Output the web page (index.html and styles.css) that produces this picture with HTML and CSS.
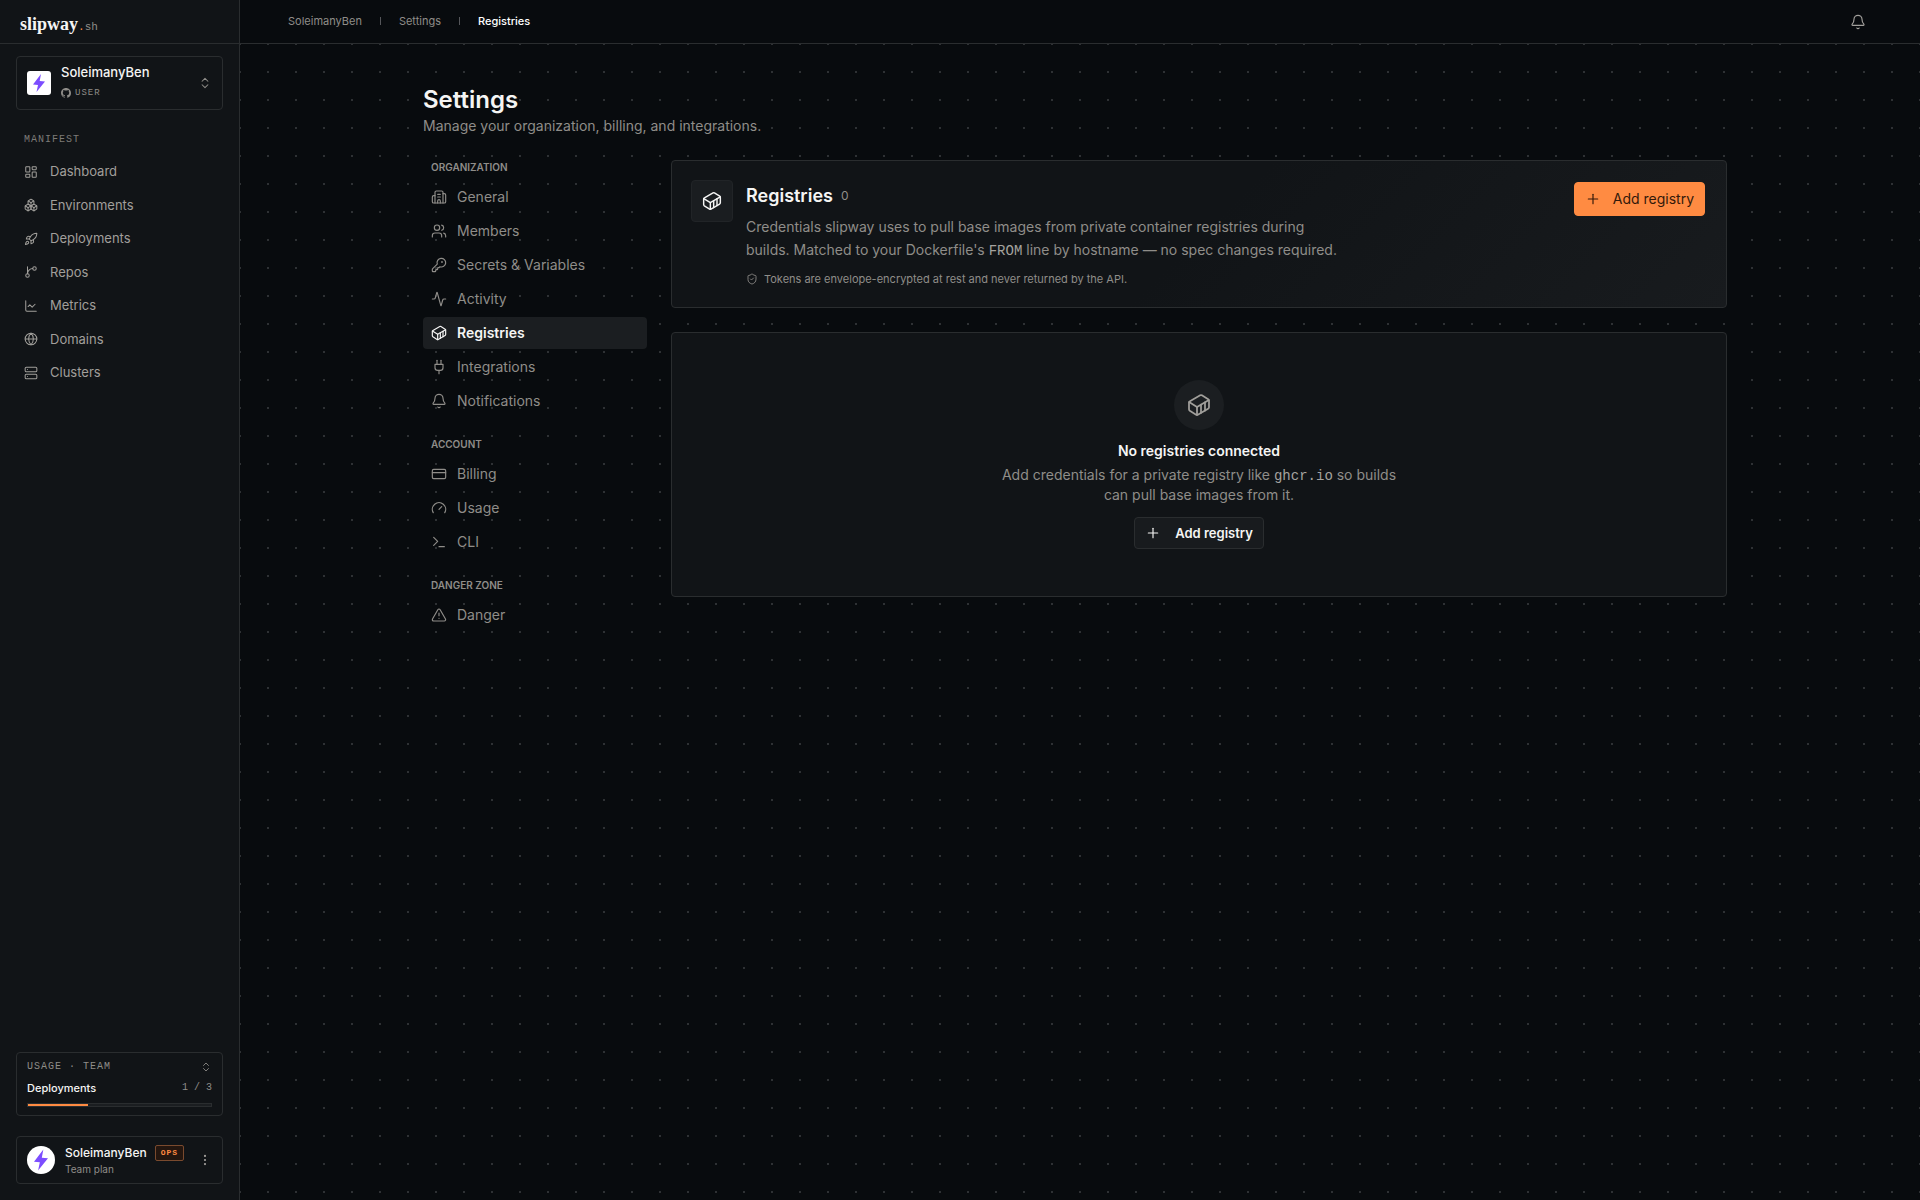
FILE: index.html
```html
<!DOCTYPE html>
<html lang="en">
<head>
    <meta charset="utf-8">
    <title>Registries - slipway.sh</title>
    <meta name="viewport" content="width=device-width, initial-scale=1">
    <link rel="stylesheet" href="styles.css">
</head>
<body>
    <svg class="sprite" aria-hidden="true">
        <symbol id="dashboard" viewBox="0 0 24 24"><rect x="3" y="3" width="7" height="9" rx="1"/><rect x="14" y="3" width="7" height="5" rx="1"/><rect x="14" y="12" width="7" height="9" rx="1"/><rect x="3" y="16" width="7" height="5" rx="1"/></symbol>
        <symbol id="boxes" viewBox="0 0 24 24"><path d="M2.97 12.92A2 2 0 0 0 2 14.63v3.24a2 2 0 0 0 .97 1.71l3 1.8a2 2 0 0 0 2.06 0L12 19v-5.5l-5-3-4.03 2.42Z"/><path d="m7 16.5-4.74-2.85"/><path d="m7 16.5 5-3"/><path d="M7 16.5v5.17"/><path d="M12 13.5V19l3.97 2.38a2 2 0 0 0 2.06 0l3-1.8a2 2 0 0 0 .97-1.71v-3.24a2 2 0 0 0-.97-1.71L17 10.5l-5 3Z"/><path d="m17 16.5-5-3"/><path d="m17 16.5 4.74-2.85"/><path d="M17 16.5v5.17"/><path d="M7.97 4.42A2 2 0 0 0 7 6.13v4.37l5 3 5-3V6.13a2 2 0 0 0-.97-1.71l-3-1.8a2 2 0 0 0-2.06 0l-3 1.8Z"/><path d="M12 8 7.26 5.15"/><path d="m12 8 4.74-2.85"/><path d="M12 13.5V8"/></symbol>
        <symbol id="rocket" viewBox="0 0 24 24"><path d="M4.5 16.5c-1.5 1.26-2 5-2 5s3.74-.5 5-2c.71-.84.7-2.13-.09-2.91a2.18 2.18 0 0 0-2.91-.09z"/><path d="m12 15-3-3a22 22 0 0 1 2-3.95A12.88 12.88 0 0 1 22 2c0 2.72-.78 7.5-6 11a22.35 22.35 0 0 1-4 2z"/><path d="M9 12H4s.55-3.03 2-4c1.62-1.08 5 0 5 0"/><path d="M12 15v5s3.03-.55 4-2c1.08-1.62 0-5 0-5"/></symbol>
        <symbol id="branch" viewBox="0 0 24 24"><path d="M15 6a9 9 0 0 0-9 9V3"/><circle cx="18" cy="6" r="3"/><circle cx="6" cy="18" r="3"/></symbol>
        <symbol id="chart" viewBox="0 0 24 24"><path d="M3 3v16a2 2 0 0 0 2 2h16"/><path d="m19 9-5 5-4-4-3 3"/></symbol>
        <symbol id="globe" viewBox="0 0 24 24"><circle cx="12" cy="12" r="10"/><path d="M12 2a14.5 14.5 0 0 0 0 20 14.5 14.5 0 0 0 0-20"/><path d="M2 12h20"/></symbol>
        <symbol id="server" viewBox="0 0 24 24"><rect x="2" y="2" width="20" height="8" rx="2"/><rect x="2" y="14" width="20" height="8" rx="2"/><path d="M6 6h.01M6 18h.01"/></symbol>
        <symbol id="building" viewBox="0 0 24 24"><path d="M10 12h4"/><path d="M10 8h4"/><path d="M14 21v-3a2 2 0 0 0-4 0v3"/><path d="M6 10H4a2 2 0 0 0-2 2v7a2 2 0 0 0 2 2h16a2 2 0 0 0 2-2V9a2 2 0 0 0-2-2h-2"/><path d="M6 21V5a2 2 0 0 1 2-2h8a2 2 0 0 1 2 2v16"/></symbol>
        <symbol id="users" viewBox="0 0 24 24"><path d="M16 21v-2a4 4 0 0 0-4-4H6a4 4 0 0 0-4 4v2"/><circle cx="9" cy="7" r="4"/><path d="M22 21v-2a4 4 0 0 0-3-3.87"/><path d="M16 3.13a4 4 0 0 1 0 7.75"/></symbol>
        <symbol id="key" viewBox="0 0 24 24"><path d="M2.586 17.414A2 2 0 0 0 2 18.828V21a1 1 0 0 0 1 1h3a1 1 0 0 0 1-1v-1a1 1 0 0 1 1-1h1a1 1 0 0 0 1-1v-1a1 1 0 0 1 1-1h.172a2 2 0 0 0 1.414-.586l.814-.814a6.5 6.5 0 1 0-4-4z"/><circle cx="16.5" cy="7.5" r=".5" fill="currentColor"/></symbol>
        <symbol id="activity" viewBox="0 0 24 24"><path d="M22 12h-2.48a2 2 0 0 0-1.93 1.46l-2.35 8.36a.25.25 0 0 1-.48 0L9.24 2.18a.25.25 0 0 0-.48 0l-2.35 8.36A2 2 0 0 1 4.49 12H2"/></symbol>
        <symbol id="container" viewBox="0 0 24 24"><path d="M22 7.7c0-.6-.4-1.2-.8-1.5l-6.3-3.9a1.72 1.72 0 0 0-1.7 0l-10.3 6c-.5.2-.9.8-.9 1.4v6.6c0 .5.4 1.2.8 1.5l6.3 3.9a1.72 1.72 0 0 0 1.7 0l10.3-6c.5-.3.9-1 .9-1.5Z"/><path d="M10 21.9V14L2.1 9.1"/><path d="m10 14 11.9-6.9"/><path d="M14 19.8v-8.1"/><path d="M18 17.5V9.4"/></symbol>
        <symbol id="plug" viewBox="0 0 24 24"><path d="M12 22v-5"/><path d="M9 8V2"/><path d="M15 8V2"/><path d="M18 8v5a4 4 0 0 1-4 4h-4a4 4 0 0 1-4-4V8Z"/></symbol>
        <symbol id="bell" viewBox="0 0 24 24"><path d="M10.268 21a2 2 0 0 0 3.464 0"/><path d="M3.262 15.326A1 1 0 0 0 4 17h16a1 1 0 0 0 .74-1.673C19.41 13.956 18 12.499 18 8A6 6 0 0 0 6 8c0 4.499-1.411 5.956-2.738 7.326"/></symbol>
        <symbol id="card" viewBox="0 0 24 24"><rect x="2" y="5" width="20" height="14" rx="2"/><path d="M2 10h20"/></symbol>
        <symbol id="gauge" viewBox="0 0 24 24"><path d="m12 14 4-4"/><path d="M3.34 19a10 10 0 1 1 17.32 0"/></symbol>
        <symbol id="terminal" viewBox="0 0 24 24"><path d="m4 17 6-6-6-6"/><path d="M12 19h8"/></symbol>
        <symbol id="alert" viewBox="0 0 24 24"><path d="m21.73 18-8-14a2 2 0 0 0-3.48 0l-8 14A2 2 0 0 0 4 21h16a2 2 0 0 0 1.73-3"/><path d="M12 9v4"/><path d="M12 17h.01"/></symbol>
        <symbol id="shield" viewBox="0 0 24 24"><path d="M20 13c0 5-3.5 7.5-7.66 8.95a1 1 0 0 1-.67-.01C7.5 20.5 4 18 4 13V6a1 1 0 0 1 1-1c2 0 4.5-1.2 6.24-2.72a1.17 1.17 0 0 1 1.52 0C14.51 3.81 17 5 19 5a1 1 0 0 1 1 1z"/><path d="m9 12 2 2 4-4"/></symbol>
        <symbol id="updown" viewBox="0 0 24 24"><path d="m7 15 5 5 5-5"/><path d="m7 9 5-5 5 5"/></symbol>
        <symbol id="plus" viewBox="0 0 24 24"><path d="M5 12h14"/><path d="M12 5v14"/></symbol>
        <symbol id="more" viewBox="0 0 24 24"><circle cx="12" cy="5" r="1"/><circle cx="12" cy="12" r="1"/><circle cx="12" cy="19" r="1"/></symbol>
        <symbol id="github" viewBox="0 0 16 16"><path fill="currentColor" stroke="none" d="M8 0C3.58 0 0 3.58 0 8c0 3.54 2.29 6.53 5.47 7.59.4.07.55-.17.55-.38 0-.19-.01-.82-.01-1.49-2.01.37-2.53-.49-2.69-.94-.09-.23-.48-.94-.82-1.13-.28-.15-.68-.52-.01-.53.63-.01 1.08.58 1.23.82.72 1.21 1.87.87 2.33.66.07-.52.28-.87.51-1.07-1.78-.2-3.64-.89-3.64-3.95 0-.87.31-1.59.82-2.15-.08-.2-.36-1.02.08-2.12 0 0 .67-.21 2.2.82a7.6 7.6 0 0 1 4 0c1.53-1.04 2.2-.82 2.2-.82.44 1.1.16 1.92.08 2.12.51.56.82 1.27.82 2.15 0 3.07-1.87 3.75-3.65 3.95.29.25.54.73.54 1.48 0 1.07-.01 1.93-.01 2.2 0 .21.15.46.55.38A8 8 0 0 0 16 8c0-4.42-3.58-8-8-8z"/></symbol>
        <symbol id="bolt" viewBox="0 0 24 24"><path fill="#7c4dff" stroke="none" d="M14 3 6 13.5 11 14 9.5 21 18 10.5 12.7 10z"/></symbol>
    </svg>

    <div class="app">
        <aside class="sidebar">
            <a class="logo" href="#">slipway<span class="logo-dot">.</span><span class="logo-tld">sh</span></a>

            <button class="org" type="button">
                <svg class="org-avatar"><use href="#bolt"/></svg>
                <span class="org-text">
                    <span class="org-name">SoleimanyBen</span>
                    <span class="org-type"><svg class="icon icon-xs"><use href="#github"/></svg>USER</span>
                </span>
                <svg class="icon icon-sm"><use href="#updown"/></svg>
            </button>

            <nav class="nav">
                <h2 class="nav-title">MANIFEST</h2>
                <a href="#"><svg class="icon icon-sm"><use href="#dashboard"/></svg>Dashboard</a>
                <a href="#"><svg class="icon icon-sm"><use href="#boxes"/></svg>Environments</a>
                <a href="#"><svg class="icon icon-sm"><use href="#rocket"/></svg>Deployments</a>
                <a href="#"><svg class="icon icon-sm"><use href="#branch"/></svg>Repos</a>
                <a href="#"><svg class="icon icon-sm"><use href="#chart"/></svg>Metrics</a>
                <a href="#"><svg class="icon icon-sm"><use href="#globe"/></svg>Domains</a>
                <a href="#"><svg class="icon icon-sm"><use href="#server"/></svg>Clusters</a>
            </nav>

            <button class="usage" type="button">
                <span class="usage-row usage-title">USAGE · TEAM <svg class="icon icon-xs"><use href="#updown"/></svg></span>
                <span class="usage-row"><span class="usage-name">Deployments</span><span class="usage-count">1 / 3</span></span>
                <span class="meter"><span class="meter-fill" style="width: 33%"></span></span>
            </button>

            <button class="user" type="button">
                <svg class="user-avatar"><use href="#bolt"/></svg>
                <span class="user-text">
                    <span class="user-name">SoleimanyBen <span class="badge">OPS</span></span>
                    <span class="user-plan">Team plan</span>
                </span>
                <svg class="icon icon-sm"><use href="#more"/></svg>
            </button>
        </aside>

        <div class="main">
            <header class="topbar">
                <nav class="crumbs">
                    <a href="#">SoleimanyBen</a>
                    <a href="#">Settings</a>
                    <a href="#" class="current">Registries</a>
                </nav>
                <button class="bell" type="button" aria-label="Notifications"><svg class="icon"><use href="#bell"/></svg></button>
            </header>

            <main class="canvas">
                <div class="page">
                    <h1>Settings</h1>
                    <p class="lead">Manage your organization, billing, and integrations.</p>

                    <div class="layout">
                        <nav class="subnav">
                            <section>
                                <h2>ORGANIZATION</h2>
                                <a href="#"><svg class="icon"><use href="#building"/></svg>General</a>
                                <a href="#"><svg class="icon"><use href="#users"/></svg>Members</a>
                                <a href="#"><svg class="icon"><use href="#key"/></svg>Secrets &amp; Variables</a>
                                <a href="#"><svg class="icon"><use href="#activity"/></svg>Activity</a>
                                <a href="#" class="active"><svg class="icon"><use href="#container"/></svg>Registries</a>
                                <a href="#"><svg class="icon"><use href="#plug"/></svg>Integrations</a>
                                <a href="#"><svg class="icon"><use href="#bell"/></svg>Notifications</a>
                            </section>
                            <section>
                                <h2>ACCOUNT</h2>
                                <a href="#"><svg class="icon"><use href="#card"/></svg>Billing</a>
                                <a href="#"><svg class="icon"><use href="#gauge"/></svg>Usage</a>
                                <a href="#"><svg class="icon"><use href="#terminal"/></svg>CLI</a>
                            </section>
                            <section>
                                <h2>DANGER ZONE</h2>
                                <a href="#"><svg class="icon"><use href="#alert"/></svg>Danger</a>
                            </section>
                        </nav>

                        <div class="panels">
                            <section class="panel intro">
                                <span class="intro-icon"><svg class="icon icon-lg"><use href="#container"/></svg></span>
                                <div class="intro-text">
                                    <h2>Registries <span class="count">0</span></h2>
                                    <p>Credentials slipway uses to pull base images from private container registries during<br>builds. Matched to your Dockerfile's <code>FROM</code> line by hostname — no spec changes required.</p>
                                    <p class="note"><svg class="icon icon-xs"><use href="#shield"/></svg>Tokens are envelope-encrypted at rest and never returned by the API.</p>
                                </div>
                                <button class="btn btn-primary" type="button"><svg class="icon"><use href="#plus"/></svg>Add registry</button>
                            </section>

                            <section class="panel empty">
                                <span class="empty-icon"><svg class="icon icon-xl"><use href="#container"/></svg></span>
                                <h3>No registries connected</h3>
                                <p>Add credentials for a private registry like <code>ghcr.io</code> so builds<br>can pull base images from it.</p>
                                <button class="btn" type="button"><svg class="icon"><use href="#plus"/></svg>Add registry</button>
                            </section>
                        </div>
                    </div>
                </div>
            </main>
        </div>
    </div>
</body>
</html>
```
FILE: styles.css
```css
:root {
    --bg: #080b0e;
    --surface: #111417;
    --raised: #1b1e21;
    --border: #2a2d2f;
    --text: #f5f5f4;
    --muted: #8f8d89;
    --accent: #ff8b42;
    --sans: Inter, "Liberation Sans", sans-serif;
    --mono: "Liberation Mono", monospace;
}

* {
    box-sizing: border-box;
}

body {
    margin: 0;
    background: var(--bg);
    color: var(--text);
    font-family: var(--sans);
    font-size: 14px;
    line-height: 20px;
}

h1, h2, h3, p {
    margin: 0;
}

a {
    color: inherit;
    text-decoration: none;
}

button {
    font: inherit;
    color: inherit;
    text-align: left;
    cursor: pointer;
}

code {
    font-family: var(--mono);
    font-size: 14px;
    line-height: 1;
    color: #a5a39f;
}

.sprite {
    display: none;
}

.icon {
    width: 16px;
    height: 16px;
    flex: none;
    fill: none;
    stroke: currentColor;
    stroke-width: 1.75;
    stroke-linecap: round;
    stroke-linejoin: round;
}

.icon-xs {
    width: 12px;
    height: 12px;
}

.icon-sm {
    width: 14px;
    height: 14px;
}

.icon-lg {
    width: 20px;
    height: 20px;
}

.icon-xl {
    width: 24px;
    height: 24px;
}

.app {
    display: flex;
    min-height: 100vh;
}

/* sidebar */
.sidebar {
    display: flex;
    flex-direction: column;
    width: 240px;
    flex: none;
    padding-bottom: 16px;
    background: var(--surface);
    border-right: 1px solid var(--border);
}

.logo {
    height: 44px;
    padding: 12px 20px 0;
    border-bottom: 1px solid var(--border);
    font-family: "Liberation Serif", serif;
    font-size: 18px;
    font-weight: bold;
    line-height: 24px;
}

.logo-dot,
.logo-tld {
    font-family: var(--mono);
    font-size: 11px;
    font-weight: normal;
}

.logo-dot {
    color: var(--accent);
}

.logo-tld {
    color: var(--muted);
}

.org,
.usage,
.user {
    margin: 0 16px;
    padding: 0 10px;
    background: none;
    border: 1px solid var(--border);
    border-radius: 4px;
}

.org {
    display: flex;
    align-items: center;
    gap: 10px;
    height: 54px;
    margin-top: 12px;
    color: var(--muted);
}

.org-avatar {
    width: 24px;
    height: 24px;
    flex: none;
    background: #fff;
    border-radius: 3px;
}

.org-text,
.user-text {
    display: flex;
    flex-direction: column;
    flex: 1;
}

.org-text {
    gap: 1px;
    padding-bottom: 2px;
}

.org-name {
    color: var(--text);
    font-size: 13px;
    font-weight: 500;
}

.org-type {
    display: flex;
    align-items: center;
    gap: 4px;
    font-family: var(--mono);
    font-size: 9px;
    letter-spacing: 1px;
}

.org-type .icon {
    width: 10px;
    height: 10px;
}

.nav {
    display: flex;
    flex-direction: column;
    gap: 2px;
    flex: 1;
    padding: 22px 16px;
    color: #a19f9b;
    font-size: 13px;
    line-height: 1.5;
}

.nav-title {
    margin-bottom: 6px;
    padding: 0 8px;
    color: #7d7b78;
    font-family: var(--mono);
    font-size: 10px;
    font-weight: normal;
    line-height: 16px;
    letter-spacing: 1px;
}

.nav a {
    display: flex;
    align-items: center;
    gap: 12px;
    padding: 6px 8px;
}

.usage {
    display: flex;
    flex-direction: column;
    height: 64px;
    padding-top: 6px;
}

.usage-row {
    display: flex;
    align-items: center;
    justify-content: space-between;
    height: 22px;
}

.usage-title {
    height: 16px;
    margin-bottom: 2px;
    color: var(--muted);
    font-family: var(--mono);
    font-size: 10px;
    letter-spacing: 1px;
}

.usage-name {
    font-size: 11px;
    font-weight: 500;
}

.usage-count {
    color: var(--muted);
    font-family: var(--mono);
    font-size: 10px;
}

.meter {
    height: 4px;
    margin-top: 4px;
    background: var(--raised);
    border: 1px solid var(--border);
}

.meter-fill {
    display: block;
    height: 2px;
    background: var(--accent);
}

.user {
    display: flex;
    align-items: center;
    gap: 10px;
    height: 48px;
    margin-top: 20px;
}

.user-avatar {
    width: 28px;
    height: 28px;
    flex: none;
    background: #fff;
    border-radius: 50%;
}

.user-name {
    display: flex;
    align-items: center;
    gap: 8px;
    font-size: 12px;
    font-weight: 500;
    line-height: 18px;
}

.user-plan {
    color: var(--muted);
    font-size: 10px;
    line-height: 14px;
}

.user .icon-sm {
    margin-left: -10px;
    color: #a19f9b;
}

.badge {
    padding: 0 5px;
    background: #24160f;
    border: 1px solid #7a4a2e;
    border-radius: 2px;
    color: var(--accent);
    font-family: var(--mono);
    font-size: 8px;
    font-weight: bold;
    line-height: 14px;
    letter-spacing: 1px;
}

/* top bar */
.main {
    display: flex;
    flex-direction: column;
    flex: 1;
    background-image: radial-gradient(circle, #2e3134 1px, transparent 1px);
    background-size: 28px 28px;
    background-position: 14px 2px;
}

.topbar {
    display: flex;
    align-items: center;
    justify-content: space-between;
    height: 44px;
    padding: 0 48px;
    background: var(--bg);
    border-bottom: 1px solid var(--border);
}

.crumbs {
    display: flex;
    align-items: center;
    padding-bottom: 2px;
    color: var(--muted);
    font-size: 11px;
}

.crumbs a + a {
    display: flex;
    align-items: center;
}

.crumbs a + a::before {
    content: "";
    width: 1px;
    height: 8px;
    margin: 0 18px;
    background: #55565a;
}

.crumbs .current {
    color: #fff;
    font-weight: 500;
}

.bell {
    display: flex;
    padding: 6px;
    background: none;
    border: 0;
    color: #a19f9b;
}

.canvas {
    flex: 1;
    padding: 40px 10px 40px 0;
}

.page {
    max-width: 1400px;
    margin: 0 auto;
    padding: 0 48px;
}

h1 {
    font-size: 24px;
    font-weight: 600;
    line-height: 32px;
}

.lead {
    color: var(--muted);
}

.layout {
    display: grid;
    grid-template-columns: 224px 1fr;
    align-items: start;
    gap: 24px;
    margin-top: 24px;
}

/* settings menu */
.subnav {
    display: flex;
    flex-direction: column;
    gap: 20px;
    color: var(--muted);
}

.subnav section {
    display: flex;
    flex-direction: column;
    gap: 2px;
}

.subnav h2 {
    margin-bottom: 4px;
    padding: 0 8px;
    font-size: 10px;
    font-weight: 600;
    line-height: 15px;
}

.subnav a {
    display: flex;
    align-items: center;
    gap: 10px;
    height: 32px;
    padding: 0 8px;
    border-radius: 4px;
}

.subnav .active {
    background: var(--raised);
    color: var(--text);
    font-weight: 600;
}

/* panels */
.panels {
    display: flex;
    flex-direction: column;
    gap: 24px;
}

.panel {
    background: var(--surface);
    border: 1px solid var(--border);
    border-radius: 4px;
}

.intro {
    display: flex;
    align-items: flex-start;
    gap: 13px;
    padding: 19px 21px 18px 19px;
    background: linear-gradient(135deg, var(--surface) 50%, #181b1e);
}

.intro-icon {
    display: flex;
    align-items: center;
    justify-content: center;
    width: 42px;
    height: 42px;
    flex: none;
    background: #1a1d20;
    border: 1px solid #212427;
    border-radius: 4px;
}

.intro-text {
    flex: 1;
    color: var(--muted);
}

.intro-text h2 {
    display: flex;
    align-items: center;
    gap: 8px;
    color: var(--text);
    font-size: 18px;
    font-weight: 600;
    line-height: 32px;
}

.count {
    color: var(--muted);
    font-size: 12px;
    font-weight: normal;
}

.intro-text p {
    margin-top: 3px;
    line-height: 23px;
}

.intro-text .note {
    display: flex;
    align-items: center;
    gap: 6px;
    margin-top: 8px;
    font-size: 11px;
    line-height: 20px;
}

.btn {
    display: flex;
    align-items: center;
    gap: 14px;
    height: 32px;
    padding: 0 10px;
    background: #181b1e;
    border: 1px solid var(--border);
    border-radius: 4px;
    font-size: 13px;
    font-weight: 600;
}

.btn-primary {
    gap: 12px;
    height: 34px;
    margin-top: 2px;
    background: var(--accent);
    border-color: var(--accent);
    color: #33190a;
    font-size: 14px;
    font-weight: 400;
}

.empty {
    display: flex;
    flex-direction: column;
    align-items: center;
    padding: 47px;
    text-align: center;
}

.empty-icon {
    display: flex;
    align-items: center;
    justify-content: center;
    width: 50px;
    height: 50px;
    background: var(--raised);
    border-radius: 50%;
    color: #a19f9b;
}

.empty h3 {
    margin-top: 11px;
    font-size: 14px;
    font-weight: 600;
}

.empty p {
    margin: 4px 0 12px;
    color: var(--muted);
}
```
